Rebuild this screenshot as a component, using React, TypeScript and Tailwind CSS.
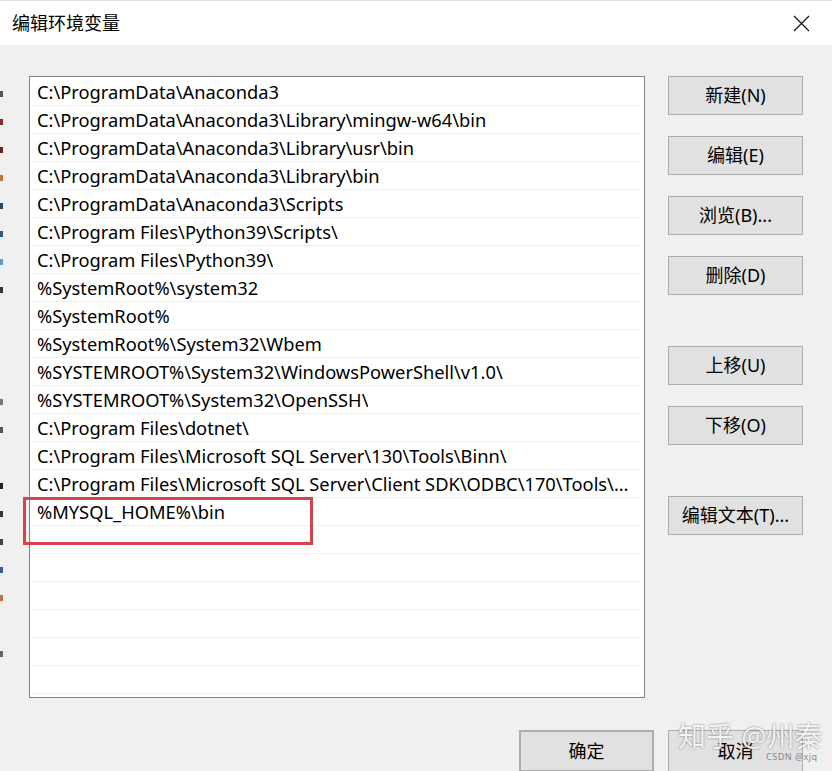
import React from "react";

const ROWS = [
  "C:\\ProgramData\\Anaconda3",
  "C:\\ProgramData\\Anaconda3\\Library\\mingw-w64\\bin",
  "C:\\ProgramData\\Anaconda3\\Library\\usr\\bin",
  "C:\\ProgramData\\Anaconda3\\Library\\bin",
  "C:\\ProgramData\\Anaconda3\\Scripts",
  "C:\\Program Files\\Python39\\Scripts\\",
  "C:\\Program Files\\Python39\\",
  "%SystemRoot%\\system32",
  "%SystemRoot%",
  "%SystemRoot%\\System32\\Wbem",
  "%SYSTEMROOT%\\System32\\WindowsPowerShell\\v1.0\\",
  "%SYSTEMROOT%\\System32\\OpenSSH\\",
  "C:\\Program Files\\dotnet\\",
  "C:\\Program Files\\Microsoft SQL Server\\130\\Tools\\Binn\\",
  "C:\\Program Files\\Microsoft SQL Server\\Client SDK\\ODBC\\170\\Tools\\Binn\\",
  "%MYSQL_HOME%\\bin",
  "",
  "",
  "",
  "",
  "",
  "",
];

// 右侧按钮，extra 表示上方多留一段空
const BUTTONS = [
  { label: "新建(N)", extra: false },
  { label: "编辑(E)", extra: false },
  { label: "浏览(B)...", extra: false },
  { label: "删除(D)", extra: false },
  { label: "上移(U)", extra: true },
  { label: "下移(O)", extra: false },
  { label: "编辑文本(T)...", extra: true },
];

// 左侧露出的背景窗口碎片
const EDGE_MARKS = [
  "bg-[#555]", "bg-[#8a2a2a]", "bg-[#6a2020]", "bg-[#c8703a]", "bg-[#2a4a6a]",
  "bg-[#2a5a8a]", "bg-[#5a9ad0]", "bg-[#333]", "", "", "", "bg-[#777]",
  "bg-[#555]", "", "bg-[#222]", "bg-[#333]", "bg-[#444]", "bg-[#3a5aa0]", "bg-[#c07040]", "", "bg-[#666]",
];

function WinButton({ label, className = "" }: { label: string; className?: string }) {
  return (
    <div
      className={`w-[135px] h-[39px] flex items-center justify-center bg-[#e1e1e1] border border-[#adadad] text-[18px] text-black whitespace-nowrap ${className}`}
    >
      {label}
    </div>
  );
}

export default function App() {
  return (
    <div
      className="relative w-[832px] h-[771px] overflow-hidden bg-[#f0f0f0] flex flex-col"
      style={{ fontFamily: '"Noto Sans", "Noto Sans CJK SC", sans-serif' }}
    >
      {/* 标题栏 */}
      <div className="h-[45px] shrink-0 bg-white border-t border-[#e2e2e2] flex items-center justify-between pl-[12px] pr-[22px]">
        <span className="text-[18px] text-black leading-[24px]">编辑环境变量</span>
        <svg width="17" height="17" viewBox="0 0 17 17">
          <path d="M1 1 L16 16 M16 1 L1 16" stroke="#111" strokeWidth="1.2" />
        </svg>
      </div>

      <div className="flex flex-1">
        {/* 左边缘 */}
        <div className="w-[4px] flex flex-col pt-[46px] gap-[22px]">
          {EDGE_MARKS.map((c, i) => (
            <div key={i} className={`w-[3px] h-[6px] ${c}`} />
          ))}
        </div>

        <div className="flex-1 pl-[25px] pr-[29px] flex flex-col">
          <div className="flex gap-[23px] pt-[31px]">
            {/* 列表 */}
            <div className="w-[616px] h-[622px] bg-white border border-[#828282] overflow-hidden pt-[1px]">
              {ROWS.map((r, i) => (
                <div key={i} className="h-[28px] mx-[2px] border-b border-[#efefef] flex items-center pl-[5px] pr-[9px]">
                  <span className="text-[18.3px] text-black leading-[26px] whitespace-nowrap overflow-hidden text-ellipsis">
                    {r}
                  </span>
                </div>
              ))}
            </div>

            {/* 按钮列 */}
            <div className="flex flex-col">
              {BUTTONS.map((b, i) => (
                <WinButton
                  key={b.label}
                  label={b.label}
                  className={i === 0 ? "" : b.extra ? "mt-[51px]" : "mt-[21px]"}
                />
              ))}
            </div>
          </div>

          {/* 底部按钮 */}
          <div className="flex justify-end gap-[14px] mt-[32px]">
            <WinButton label="确定" className="border-2 border-[#0078d7] h-[42px]" />
            <WinButton label="取消" className="h-[42px]" />
          </div>
        </div>
      </div>

      {/* 红框标注 */}
      <div className="absolute left-[23px] top-[497px] w-[290px] h-[48px] border-[3px] border-[#d8424c]" />

      {/* 水印 */}
      <div className="absolute left-[678px] top-[722px] whitespace-nowrap text-[28px] leading-none text-white/90 [text-shadow:0_0_2px_rgba(0,0,0,0.55)]">
        知乎 @州秦
      </div>
      <div className="absolute left-[766px] top-[752px] whitespace-nowrap text-[9px] leading-none text-[#888] tracking-[0.5px]">
        CSDN @xjq
      </div>
    </div>
  );
}
